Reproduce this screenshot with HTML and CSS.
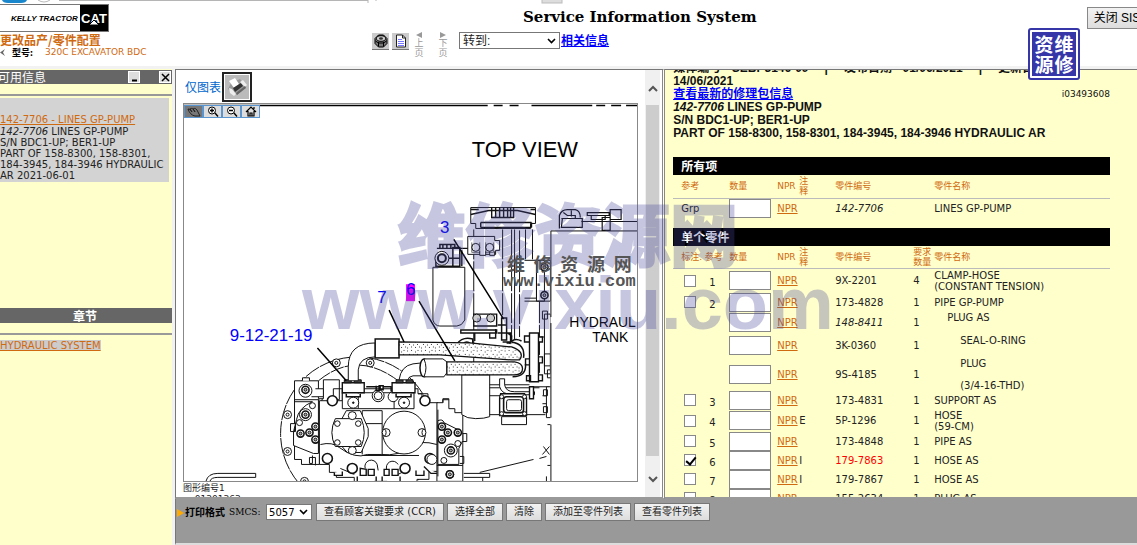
FILE: index.html
```html
<!DOCTYPE html>
<html lang="zh-CN">
<head>
<meta charset="utf-8">
<title>Service Information System</title>
<link rel="stylesheet" href="styles.css">
</head>
<body>
<div class="app">
  <header class="top">
    <svg class="chrome" width="600" height="4" viewBox="0 0 600 4" aria-hidden="true">
      <path d="M2 0h25q-1 3-6 3H8q-5 0-6-3z" fill="#1a86cc"/>
      <path d="M38 0q6 4 12 0" fill="none" stroke="#bbb"/>
      <path d="M59 .5H368M368 0V3M376 0V1" stroke="#b5b5b5"/>
      <rect x="542" y="-1" width="20" height="4" fill="#ddd" stroke="#bbb"/>
    </svg>
    <div class="brand">
      <div class="logo"><span class="dealer">KELLY TRACTOR</span><span class="cat">CAT<svg class="cat-tri" width="10" height="5" viewBox="0 0 10 5"><path d="M0 5 5 0l5 5z" fill="#fff" stroke="#000"/></svg></span></div>
      <a class="change" href="#">更改品产/零件配置</a>
      <div class="model"><svg width="5" height="7" viewBox="0 0 5 7"><path d="M5 0 0 3.500 5 7 3 3.500z" fill="#666"/></svg><span>型号:</span><a href="#">320C EXCAVATOR BDC</a></div>
    </div>
    <div class="middle">
      <h1>Service Information System</h1>
      <div class="tools">
        <button class="tool" aria-label="零件"><svg width="14" height="14" viewBox="0 0 14 14"><path d="M1 4.500 4.500 1h5L13 4.500v5L9.500 13h-5L1 9.500z" fill="#777" stroke="#000"/><ellipse cx="7" cy="4.500" rx="4.500" ry="2.800" fill="#ccc" stroke="#000"/><ellipse cx="7" cy="4.500" rx="2" ry="1.300" fill="#333"/><path d="M4.500 8v4.500M9.500 8v4.500M1.500 7l3 2h5l3-2" fill="none" stroke="#000"/></svg></button>
        <button class="tool" aria-label="文档"><svg width="14" height="14" viewBox="0 0 14 14"><path d="M2.500 1h6l3 3v9h-9z" fill="#fff" stroke="#222"/><path d="M8.500 1v3h3" fill="none" stroke="#222"/><path d="M4 5.500h4M4 7.500h6M4 9.500h6M4 11.500h6" stroke="#77f"/></svg></button>
        <button class="pager"><svg width="6" height="6" viewBox="0 0 6 6"><path d="M6 0v6L0 3z" fill="#999"/></svg><span>上</span><span>页</span></button>
        <button class="pager"><svg width="6" height="6" viewBox="0 0 6 6"><path d="M0 0v6l6-3z" fill="#999"/></svg><span>下</span><span>页</span></button>
        <select class="goto" aria-label="转到"><option>转到:</option></select>
        <a class="related" href="#">相关信息</a>
      </div>
    </div>
    <button class="close-sis">关闭 SIS</button>
  </header>

  <aside class="side">
    <section class="side-part">
      <div class="bar"><h2>可用信息</h2>
        <button class="mini gap" aria-label="最小化"><svg width="9" height="9" viewBox="0 0 9 9"><path d="M2 7.500h5" stroke="#000" stroke-width="2"/></svg></button>
        <button class="mini" aria-label="关闭"><svg width="9" height="9" viewBox="0 0 9 9"><path d="m1 1 7 7M8 1 1 8" stroke="#000" stroke-width="1.500"/></svg></button>
      </div>
      <div class="strip"></div>
      <div class="info"><a href="#">142-7706 - LINES GP-PUMP</a><p><i>142-7706</i> LINES GP-PUMP<br>S/N BDC1-UP; BER1-UP<br>PART OF 158-8300, 158-8301,<br>184-3945, 184-3946 HYDRAULIC<br>AR 2021-06-01</p></div>
    </section>
    <section class="side-part">
      <div class="bar center"><h2>章节</h2></div>
      <div class="strip"></div>
      <a class="chapter" href="#">HYDRAULIC SYSTEM</a>
    </section>
  </aside>

  <main class="graphic">
    <div class="graphic-body">
      <div class="graphic-head"><a href="#">仅图表</a>
        <button class="print" aria-label="打印"><svg width="22" height="22" viewBox="0 0 22 22"><path d="m2 13 3-6 9-4 6 8-9 8z" fill="#999"/><path d="M3 5 9 2l4 6-5 4z" fill="#fff"/><path d="m7 12 8-5 2 3-8 6z" fill="#333"/><path d="m3 12 3 1 4 5-2 2-4-3zM14 6l3-2 4 5-2 2z" fill="#eee"/><path d="m10 17 9-7 1 2-9 7z" fill="#666"/></svg></button>
      </div>
      <div class="drawing">
        <div class="view-tools">
          <button class="on" aria-label="移动"><svg width="14" height="10" viewBox="0 0 14 10"><path d="M1 2q2-1 4 3L3 2q3-2 5 3L6 2q3-2 5 3l2 4H8Q3 8 1 2" fill="none" stroke="#222"/></svg></button>
          <button aria-label="放大"><svg width="14" height="11" viewBox="0 0 14 11"><circle cx="6" cy="4.500" r="3.500" fill="#fff" stroke="#000"/><path d="M4 4.500h4M6 2.500v4M9 7l3 3.500" stroke="#000" stroke-width="1.400"/></svg></button>
          <button aria-label="缩小"><svg width="14" height="11" viewBox="0 0 14 11"><circle cx="6" cy="4.500" r="3.500" fill="#fff" stroke="#000"/><path d="M4 4.500h4M9 7l3 3.500" stroke="#000" stroke-width="1.400"/></svg></button>
          <button aria-label="还原"><svg width="12" height="11" viewBox="0 0 12 11"><path d="M1 6 6 1l5 5M3 5v5h6V5M5 10V7h2v3M9 1v2" fill="none" stroke="#000" stroke-width="1.200"/></svg></button>
        </div>
        <svg class="plan" viewBox="183 104 455 379" role="img" aria-label="TOP VIEW">
          <defs>
            <pattern id="grain" width="14" height="10" patternUnits="userSpaceOnUse"><rect width="14" height="10" fill="#fff"/><path d="M1 2h1M5 1l1 1M9 3h1M12 1v1M3 5l1 1M7 6h1M11 6l1-1M1 9h1M5 8h1M9 9l1-1M13 8h1" stroke="#222" stroke-width=".9"/></pattern>
            <g id="bolt"><circle r="4" fill="#fff"/><circle r="1.500" fill="#fff"/></g>
            <g id="nut"><circle r="3.600" fill="#fff" stroke-width="1.600"/><circle r="1.500" fill="#aaa"/></g>
          </defs>
          <path d="M183 105.500H488M494 105.500h9M510 105.500h9M532 105.500h61M597 105.500h9M612 105.500h10M627 105.500h11" stroke="#000" stroke-width="1.500"/>
          <g fill="#fff" stroke="#111" stroke-width="1">
            <!-- bell housing -->
            <circle cx="357" cy="435" r="77" stroke-dasharray="16 1"/>
            <path d="M318 382Q358 349 402 385" fill="none" stroke-dasharray="14 1"/>
            <use href="#bolt" x="336" y="364"/><use href="#bolt" x="370" y="364"/><use href="#bolt" x="287" y="416"/><use href="#bolt" x="287" y="453"/><use href="#bolt" x="304" y="483"/>
            <path d="M205 483q2-8 12-8h38v4h-38q-7 0-8 4"/>
            <!-- left valve group -->
            <path d="M294 382h24v18h5v-19h16v20h-6v56h-14v9h-18v-5h-7z"/>
            <path d="M294 401h25M294 403h18q-14 6-16 18l-3 12v14l20 8h5V401M290 425h5v8h-5z"/>
            <path d="M302 382v-3h7v3M311 398h12v-8h-8M322 400l-2 6M312 457v8h-3v-6h6v8"/>
            <circle cx="305" cy="392" r="6.500"/><use href="#nut" x="305" y="391"/>
            <circle cx="305" cy="416" r="6"/><use href="#nut" x="305" y="416"/>
            <circle cx="312" cy="407" r="3"/><circle cx="299" cy="424" r="3"/>
            <use href="#nut" x="300" y="435"/><use href="#nut" x="309" y="434"/><use href="#nut" x="315" y="428"/><use href="#nut" x="315" y="441"/>
            <!-- main pump housing -->
            <path d="M319 402h23v-12h76v5h4v9h16v69h-9v8h-12v6h-30v-4h-13v4h-20v-8h-18v-5h-7v-8h-10z"/>
            <path d="M320 446q12-3 19 3 16 12 28 7h14q18 2 31-8 8-7 25-2M333 402v-12h10M418 395h10v9M362 456v-44h20v44M362 425h20M363 457h56M340 470l14 6M410 470l-12 6" fill="none"/>
            <path d="M342 394h72v16h-72zM358 394v16M394 394v16" fill="#fff"/>
            <circle cx="378" cy="397" r="6"/><circle cx="378" cy="397" r="4"/><circle cx="393" cy="398" r="5"/>
            <path d="M366 388h14v3h3v-4h-4v5h-3v-5M383 388h8v4h3" fill="none" stroke-width="1.500"/>
            <path d="M342 384h22v10h-22zM392 384h23v10h-23z" stroke-width="1.400"/>
            <path d="M344 381h7v3h-7zM354 381h7v3h-7zM396 381h7v3h-7zM406 381h7v3h-7z" fill="#444"/>
            <path d="M346 395v3h14v-3M396 395v3h15v-3" stroke-width="1.500"/>
            <circle cx="353" cy="404" r="5.500"/><circle cx="353" cy="404" r=".8" fill="#000"/><circle cx="404" cy="404" r="5.500"/><circle cx="404" cy="404" r=".8" fill="#000"/>
            <path d="M346 412h14l8 18v8l-7 16h-14l-8-9h-5q-4-10 0-22h6z"/>
            <path d="M335 420h26q6 14 0 28h-26q-7-14 0-28z"/>
            <circle cx="352" cy="417" r="4"/><circle cx="352" cy="452" r="4"/>
            <circle cx="337" cy="425" r="2.800"/><circle cx="358" cy="425" r="2.800"/><circle cx="337" cy="444" r="2.800"/><circle cx="358" cy="444" r="2.800"/>
            <circle cx="404" cy="434" r="21.500"/><circle cx="386" cy="434" r="4"/><circle cx="422" cy="434" r="4"/>
            <path d="M384 430a5 5 0 0 1 0 8M424 430a5 5 0 0 0 0 8" fill="none"/>
            <g stroke-width="1.600"><circle cx="332" cy="402" r="5"/><circle cx="425" cy="402" r="5"/><circle cx="327" cy="460" r="5"/><circle cx="430" cy="460" r="5"/><circle cx="352" cy="470" r="5"/><circle cx="405" cy="470" r="5"/></g>
            <path d="M365 470a6 6 0 0 1 12-4l1 6M387 472a6 6 0 0 1 11-6" fill="none"/>
            <path d="M360 470v7h6v-6zM368 471h6v6h-6zM384 471h5v6h-5zM392 471h6v6h-6zM334 474v3h8v-4M416 472v5h8v-5M357 478v5M376 478v5M382 478v5M400 478v5M424 468l7 7h7" stroke-width="1.400"/>
            <!-- right valve group -->
            <path d="M437 404h6v-4h6v10h6v4h8v69h-26zM437 467h26M443 404v-3h6M438 411v67" />
            <path d="M438 422q5-2 6 2l14 7 5 4v7l-4 8v16h-21z"/>
            <use href="#nut" x="442" y="428"/><use href="#nut" x="458" y="434"/><use href="#nut" x="448" y="434"/><use href="#nut" x="442" y="441"/>
            <circle cx="451" cy="452" r="6.500"/><use href="#nut" x="451" y="452"/><circle cx="458" cy="445" r="3"/><circle cx="444" cy="462" r="3"/><circle cx="432" cy="461" r="5"/>
            <circle cx="450" cy="476" r="4"/><use href="#nut" x="450" y="476"/>
            <path d="M463 435h4v8h-4M460 458h4v7h-4M464 475h26v4h-26M483 479v4M480 474l54-13M540 460l7-2" fill="none"/>
            <!-- top assembly -->
            <path d="M471 208h65v16h-5v5h-55v-5h-5z"/>
            <path d="M471 215l18-4h29l18 4M471 210h8M531 210h5M492 208v10h22v-10M496 208v10M500 208v10M504 208v10M508 208v10M511 208v10M481 223h51M481 228h51M481 223v5M532 223v5" stroke-width="1.400" fill="none"/>
            <path d="M474 230v144M503 230v86M512 230v108M520 231v107M526 230v31M533 230v31M540 262v112" fill="none" stroke-dasharray="30 2"/>
            <path d="M515 230v110" fill="none"/>
            <path d="M468 237h27v4h5v10h-4v4h-28z"/><path d="M480 252v4h6v-4M490 252v4h5v-4"/>
            <circle cx="476" cy="248" r="4"/><circle cx="490" cy="248" r="4"/><path d="M472 243v10h8v-10M486 243v10h8v-10" fill="none" stroke-width=".6"/>
            <path d="M525 261h20v41h-20M525 299h12v-36M537 261h14v41h-14z"/><use href="#nut" x="545" y="268"/><use href="#nut" x="545" y="296"/>
            <!-- filter canister -->
            <path d="M433 268h32v53q-3 6-8 6h-17q-5 0-7-6z"/>
            <path d="M436 267v-8h24v8zM437 249h26M440 245h15v4h-15zM443 245v4M447 245v4M451 245v4M460 259v-11h-7v19" stroke-width="1.500"/>
            <circle cx="442" cy="259" r="7"/><circle cx="442" cy="259" r="4" stroke-width="2"/>
            <path d="M463 249h5M462 251v16M474 315h23v12h-23zM461 331h36v3h-36zM475 334v8M490 334v5h6v-9" stroke-width="1.400"/>
            <circle cx="477" cy="319" r="4" fill="#ccc"/><circle cx="491" cy="319" r="4" fill="#ccc"/>
            <path d="M502 319h5v22h-5zM498 326h9M498 334h13v9h-8M508 334l4 3v7h-5" stroke-width="1.500"/>
            <path d="M457 345q6-8 16-5v5M463 345q4-4 8 0M510 345q4-7 12-3" stroke-width="1.500"/>
            <!-- lower pipes -->
            <path d="M462 376h28v42q-5 2-14 2t-14-4z"/>
            <path d="M490 386h40M490 389h50M490 397h12M490 416h56M530 388h20M543 397h7v8h-7M541 338h9" fill="none"/>
            <path d="M500 380v8q2 8 14 8h21v-3h-20q-9 0-10-7v-6z"/>
            <path d="M501 395h24l2 4v18h-27v-18z" stroke-width="1.400"/><rect x="504" y="398" width="20" height="16" rx="3" stroke-width="1.600"/><rect x="507" y="401" width="15" height="11" rx="2"/>
            <circle cx="502" cy="398" r="2"/><circle cx="525" cy="398" r="2"/><circle cx="502" cy="415" r="2"/><circle cx="525" cy="415" r="2"/>
            <path d="M502 418h25v8h-25z"/><path d="M530 388h4v12h-4zM530 334h9v49h-9zM525 337h5v6h-5zM539 338h4v5h-4zM526 360h4v6h-4zM539 358h4v6h-4zM527 377h4v5h-4zM539 376h4v6h-4z" stroke-width="1.400"/>
            <path d="M545 315h6v60h-6zM543 312h5v8h-5zM545 355h6v12h-6zM548 371h5v8h-5zM547 388h5v31h-5zM544 391h4v6h-4zM544 408h4v6h-4zM548 426h4v41h-4M544 448l6 8M543 456l7-8M547 478v5"/>
            <!-- hydraulic tank -->
            <path d="M638 231H551v252h88z" stroke="none"/>
            <path d="M638 231.500H551.500V318M551.500 324v95M551.500 426v57" fill="none"/>
            <path d="M560 229v-13q2-6 8-6h8q5 1 5 8M562 219h14v-3h-8l-4-3M572 211v6M563 219h20v9h-21zM588 213h22v3h-22zM592 216v4h14v-4M611 210h11v10h-11zM582 222h56M603 218h8v13h-8z" stroke-width="1.200"/>
            <!-- hose elbows and fittings -->
            <path d="M348 382v-14q0-24 27-24v14q-16 0-17 13v11z"/>
            <rect x="375" y="340" width="24" height="19" stroke-width="1.500"/>
            <path d="M399 343l71 1 42 4q14 5 8 13l-8 0-72-5h-41z" fill="url(#grain)" stroke-width="1.300"/>
            <path d="M399 381q2-14 14-16l9-1v13h-9q-5 1-5 4z"/>
            <ellipse cx="424" cy="369" rx="4" ry="9" stroke-width="1.500"/>
            <path d="M424 360h19l4 3v11l-3 4h-20q4-9 0-18z"/>
            <path d="M447 363h68q8 1 8 7t-8 6h-68z" fill="url(#grain)" stroke-width="1.300"/>
            <path d="M512 343q14 2 12 16M513 378q14 0 13-13" fill="none" stroke-width="1.500"/>
          </g>
          <path d="M317 349l29 33M389 311l15 32M419 302l36 60M454 240l50 80" stroke="#000" stroke-width="1.500"/>
          <rect class="hit" x="406" y="285" width="9" height="17"/>
          <g class="callout"><text x="229" y="342">9-12-21-19</text><text x="377" y="304">7</text><text x="406" y="296">6</text><text x="440" y="234">3</text></g>
          <text class="heading" x="472" y="157">TOP VIEW</text>
          <g class="tank"><text x="570" y="328">HYDRAUL</text><text x="593" y="343">TANK</text></g>
        </svg>
      </div>
      <p class="caption">图形编号1<br><span>g01301363</span></p>
    </div>
    <div class="scroll" aria-hidden="true">
      <svg width="10" height="7" viewBox="0 0 10 7"><path d="m1 6 4-4 4 4" fill="none" stroke="#555" stroke-width="2"/></svg>
      <div class="thumb"></div>
      <svg width="10" height="7" viewBox="0 0 10 7"><path d="m1 1 4 4 4-4" fill="none" stroke="#555" stroke-width="2"/></svg>
    </div>
  </main>

  <section class="parts">
    <div class="doc">
      <div class="meta"><span>媒体编号 - SEBP3146-09</span><span>|</span><span>发布日期 - 01/06/2021</span><span>|</span><span>更新日期 -</span></div>
      <div>14/06/2021</div>
      <div class="doc-row"><a href="#">查看最新的修理包信息</a><span>i03493608</span></div>
      <div><i>142-7706</i> LINES GP-PUMP</div>
      <div>S/N BDC1-UP; BER1-UP</div>
      <div>PART OF 158-8300, 158-8301, 184-3945, 184-3946 HYDRAULIC AR</div>
    </div>
    <h3>所有项</h3>
    <table class="all">
      <colgroup><col class="c-tick"><col class="c-ref"><col class="c-qty"><col class="c-npr"><col class="c-note"><col class="c-no"><col class="c-req"><col></colgroup>
      <thead><tr><th colspan="2">参考</th><th>数量</th><th>NPR</th><th class="stack">注释</th><th>零件编号</th><th></th><th>零件名称</th></tr></thead>
      <tbody><tr><td colspan="2">Grp</td><td><input type="text" aria-label="数量 142-7706"></td><td><a href="#">NPR</a></td><td></td><td><i>142-7706</i></td><td></td><td>LINES GP-PUMP</td></tr></tbody>
    </table>
    <h3>单个零件</h3>
    <table>
      <colgroup><col class="c-tick"><col class="c-ref"><col class="c-qty"><col class="c-npr"><col class="c-note"><col class="c-no"><col class="c-req"><col></colgroup>
      <thead><tr><th colspan="2">标注. 参考</th><th>数量</th><th>NPR</th><th class="stack">注释</th><th>零件编号</th><th class="need">要求数量</th><th>零件名称</th></tr></thead>
      <tbody>
        <tr class="roomy"><td><input type="checkbox" aria-label="1"></td><td class="ref">1</td><td><input type="text" aria-label="数量 1"></td><td><a href="#">NPR</a></td><td></td><td>9X-2201</td><td>4</td><td>CLAMP-HOSE<br>(CONSTANT TENSION)</td></tr>
        <tr><td><input type="checkbox" aria-label="2"></td><td class="ref">2</td><td><input type="text" aria-label="数量 2"></td><td><a href="#">NPR</a></td><td></td><td>173-4828</td><td>1</td><td>PIPE GP-PUMP</td></tr>
        <tr><td></td><td></td><td><input type="text" aria-label="数量 148-8411"></td><td><a href="#">NPR</a></td><td></td><td><i>148-8411</i></td><td>1</td><td class="in1">PLUG AS<br>&nbsp;</td></tr>
        <tr class="roomy"><td></td><td></td><td><input type="text" aria-label="数量 3K-0360"></td><td><a href="#">NPR</a></td><td></td><td>3K-0360</td><td>1</td><td class="in2">SEAL-O-RING<br>&nbsp;</td></tr>
        <tr><td></td><td></td><td><input type="text" aria-label="数量 9S-4185"></td><td><a href="#">NPR</a></td><td></td><td>9S-4185</td><td>1</td><td class="in2">PLUG<br><br>(3/4-16-THD)</td></tr>
        <tr><td><input type="checkbox" aria-label="3"></td><td class="ref">3</td><td><input type="text" aria-label="数量 3"></td><td><a href="#">NPR</a></td><td></td><td>173-4831</td><td>1</td><td>SUPPORT AS</td></tr>
        <tr><td><input type="checkbox" aria-label="4"></td><td class="ref">4</td><td><input type="text" aria-label="数量 4"></td><td><a href="#">NPR</a></td><td>E</td><td>5P-1296</td><td>1</td><td>HOSE<br>(59-CM)</td></tr>
        <tr><td><input type="checkbox" aria-label="5"></td><td class="ref">5</td><td><input type="text" aria-label="数量 5"></td><td><a href="#">NPR</a></td><td></td><td>173-4848</td><td>1</td><td>PIPE AS</td></tr>
        <tr><td><input type="checkbox" aria-label="6" checked></td><td class="ref">6</td><td><input type="text" aria-label="数量 6"></td><td><a href="#">NPR</a></td><td>I</td><td class="red">179-7863</td><td>1</td><td>HOSE AS</td></tr>
        <tr><td><input type="checkbox" aria-label="7"></td><td class="ref">7</td><td><input type="text" aria-label="数量 7"></td><td><a href="#">NPR</a></td><td>I</td><td>179-7867</td><td>1</td><td>HOSE AS</td></tr>
        <tr><td><input type="checkbox" aria-label="8"></td><td class="ref">8</td><td><input type="text" aria-label="数量 8"></td><td><a href="#">NPR</a></td><td></td><td>155-2634</td><td>1</td><td>PLUG AS</td></tr>
      </tbody>
    </table>
  </section>

  <footer class="actions">
    <svg width="7" height="8" viewBox="0 0 7 8"><path d="M0 0v8l7-4z" fill="#fa0"/></svg>
    <b>打印格式</b>
    <label for="smcs">SMCS:</label>
    <select id="smcs"><option>5057</option></select>
    <button>查看顾客关键要求 (CCR)</button><button>选择全部</button><button>清除</button><button>添加至零件列表</button><button>查看零件列表</button>
  </footer>

  <div class="mark-big"><div class="cn">维修资源网</div><div class="url">www.vixiu.com</div></div>
  <div class="mark-small"><div class="cn"><span>维</span><span>修</span><span>资</span><span>源</span><span>网</span></div><div class="url">www.vixiu.com</div></div>
  <div class="stamp"><span>资</span><span>维</span><span>源</span><span>修</span></div>
</div>
</body>
</html>
```
FILE: styles.css
```css
* { box-sizing: border-box; }
body { margin: 0; font: 10px/11px "DejaVu Sans", "Noto Sans CJK SC", sans-serif; color: #222; }
h1, h2, h3, p { margin: 0; }
button, select, input { font: inherit; margin: 0; }
button { padding: 0; }
a { color: #d06a10; }
svg { display: block; flex: none; }

.app {
  position: relative;
  display: grid;
  grid-template: 69px minmax(0, 1fr) 46px / 15.4% 43.1% minmax(0, 1fr);
  height: 100vh;
  overflow: hidden;
  background: #f2f2f2;
}

.top { grid-column: 1 / -1; display: flex; align-items: flex-start; background: #fff; border-bottom: 3px solid #f2f2f2; position: relative; overflow: hidden; }
.chrome { position: absolute; left: 0; top: 0; }
.brand { width: 372px; padding-top: 4px; }
.logo { display: flex; width: 109px; height: 28px; border: 1px solid #777; border-left: 0; align-items: stretch; }
.dealer { flex: 1; padding-left: 11px; white-space: nowrap; font: italic bold 8px/27px "Liberation Sans", sans-serif; color: #000; }
.cat { position: relative; width: 28px; background: #000; color: #fff; text-align: center; font: bold 13px/27px "Liberation Sans", sans-serif; }
.cat-tri { position: absolute; left: 9px; bottom: 6px; }
.change { display: block; font: bold 12px/14px "Noto Sans CJK SC", sans-serif; text-decoration: none; margin-top: 1px; }
.model { display: flex; align-items: center; gap: 7px; height: 11px; color: #000; }
.model span { font: bold 9px/11px "Noto Sans CJK SC", sans-serif; width: 26px; }
.model a { text-decoration: none; font-size: 9px; }
.middle { flex: 1; padding-top: 8px; }
h1 { font: bold 15px/18px "DejaVu Serif", serif; color: #000; padding-left: 151px; white-space: nowrap; }
.tools { display: flex; align-items: flex-start; padding-top: 6px; }
.tool { width: 17px; height: 17px; margin: 1px 3px 0 0; display: grid; place-items: center; background: #ccc; border: 0; border-bottom: 1px solid #777; }
.pager { display: flex; flex-direction: column; align-items: center; width: 10px; margin: 0 14px 0 2px; border: 0; background: none; color: #999; font: 9px/10px "Noto Sans CJK SC", sans-serif; }
.pager + .pager { margin-left: 0; margin-right: 11px; }
select {
  appearance: none;
  border: 1px solid #777;
  border-radius: 0;
  color: #222;
  background: #fff url("data:image/svg+xml,%3Csvg xmlns='http://www.w3.org/2000/svg' width='9' height='6'%3E%3Cpath d='M1 1l3.500 3.500L8 1' fill='none' stroke='%23000' stroke-width='1.600'/%3E%3C/svg%3E") no-repeat right 3px center;
}
.goto { width: 101px; height: 17px; font: 12px/14px "Liberation Sans", "Noto Sans CJK SC", sans-serif; padding: 0 14px 0 3px; }
.related { font: bold 12px/16px "Noto Sans CJK SC", sans-serif; color: #00f; margin-left: 1px; }
.close-sis { width: 60px; height: 22px; margin: 7px -10px 0 0; background: linear-gradient(#f2f2f2, #ddd); border: 1px solid #888; font: 12px/18px "Liberation Sans", "Noto Sans CJK SC", sans-serif; white-space: nowrap; }

.side { grid-row: 2 / 4; grid-column: 1; display: grid; grid-template-rows: 1fr 1fr; margin-right: 3px; background: #ffffcc; overflow: hidden; }
.bar { display: flex; align-items: center; height: 14px; margin-top: 1px; background: #666; color: #fff; }
.bar h2 { flex: 1; font: 12px/14px "Noto Sans CJK SC", sans-serif; margin-left: -2px; }
.bar.center { justify-content: center; height: 15px; }
.bar.center h2 { flex: none; font-weight: bold; }
.mini { width: 12px; height: 12px; margin-right: 1px; display: grid; place-items: center; border: 1px solid #fff; background: #ddd; }
.mini.gap { margin-right: 19px; }
.strip { height: 12px; border-bottom: 2px solid #999; }
.info { margin: 2px 3px 0 0; padding: 16px 0 0; height: 84px; background: #d3d3d3; white-space: nowrap; }
.info p { padding-top: 1px; }
.chapter { display: inline-block; margin-top: 5px; background: #ccc; }

.graphic { display: flex; min-height: 0; background: #fff; border: 1px solid #777; border-right: 3px double #888; border-bottom: 2px solid #999; padding-right: 2px; }
.graphic-body { flex: 1; min-width: 0; padding: 1px 7px 0; overflow: hidden; }
.graphic-head { display: flex; align-items: center; height: 32px; gap: 1px; padding-left: 2px; }
.graphic-head a { font: 12px/16px "Noto Sans CJK SC", sans-serif; color: #06c; text-decoration: none; }
.print { width: 30px; height: 30px; display: grid; place-items: center; border: 2px solid #222; background: #bbb; outline: 1px solid #fff; outline-offset: -3px; }
.drawing { position: relative; border: 1px solid #888; }
.plan { width: 100%; }
.view-tools { position: absolute; left: 0; top: 1px; display: flex; }
.view-tools button { width: 19px; height: 13px; display: grid; place-items: center; border: 1px solid #5b95d0; background: #ddd; }
.view-tools .on { background: #777; }
.hit { fill: #f0f; }
.callout { font: 17px "Liberation Sans", sans-serif; fill: #00f; }
.heading { font: 22px "Liberation Sans", sans-serif; fill: #000; }
.tank { font: 14px "Liberation Sans", sans-serif; fill: #000; }
.caption { padding-top: 1px; font: 9px/11px "DejaVu Sans", "Noto Sans CJK SC", sans-serif; white-space: nowrap; }
.caption span { padding-left: 6px; }
.scroll { width: 15px; display: flex; flex-direction: column; align-items: center; padding: 15px 0 14px; background: #f0f0f0; }
.thumb { flex: 1; width: 13px; margin: 13px 0 20px; background: #cdcdcd; }

.parts { min-width: 0; overflow: hidden; background: #ffffcc; border-top: 1px solid #777; border-bottom: 2px solid #999; padding: 0 27px 0 8px; }
.doc { margin-top: -8px; font: bold 12px/13px "Liberation Sans", "Noto Sans CJK SC", sans-serif; color: #111; white-space: nowrap; }
.doc div { height: 13px; }
.meta { display: flex; gap: 16px; }
.doc-row { display: flex; justify-content: space-between; }
.doc-row a { color: #00f; }
.doc-row span { font: 9px/13px "DejaVu Sans", sans-serif; }
h3 { height: 18px; margin-top: 17px; padding-left: 8px; background: #000; color: #fff; font: bold 12px/18px "Noto Sans CJK SC", sans-serif; }
table { width: 100%; table-layout: fixed; border-collapse: collapse; }
.all { margin-bottom: -7px; }
th { height: 23px; padding: 0; border-bottom: 1px solid #bbb; color: #d06a10; font-weight: normal; font-size: 9px; line-height: 10px; text-align: left; vertical-align: middle; white-space: nowrap; }
td { height: 19px; padding: 0; vertical-align: middle; white-space: nowrap; }
.roomy td { height: 24px; }
th:first-child, td:first-child { padding-left: 8px; }
td:first-child input { margin-left: 3px; }
th.stack { white-space: normal; padding-right: 26px; word-break: break-all; }
th.need { white-space: normal; }
.c-tick { width: 36px; } .c-ref { width: 20px; } .c-qty { width: 48px; } .c-npr { width: 22px; }
.c-note { width: 36px; } .c-no { width: 78px; } .c-req { width: 21px; }
input[type="text"] { display: block; width: 42px; height: 19px; padding: 0; border: 1px solid #888; border-radius: 0; background: #fff; }
input[type="checkbox"] { appearance: none; display: block; position: relative; width: 12px; height: 12px; border: 1px solid #888; background: #fff; }
input[type="checkbox"]:checked::after { content: ""; position: absolute; left: 3px; top: 0; width: 4px; height: 8px; border: solid #000; border-width: 0 2px 2px 0; transform: rotate(40deg); }
.ref { padding-top: 4px; }
.in1 { padding-left: 13px; }
.in2 { padding-left: 26px; }
.red { color: #f00; }

.actions { grid-column: 2 / 4; display: flex; align-items: flex-start; padding: 4px 0 0 1px; background: #999; border-left: 1px solid #777; border-bottom: 2px solid #ddd; color: #000; white-space: nowrap; }
.actions svg { margin-top: 6px; }
.actions b { font: bold 10px/19px "Liberation Serif", "Noto Sans CJK SC", serif; margin: 0 4px 0 1px; }
.actions label { font: 9px/19px "DejaVu Serif", serif; width: 37px; }
.actions select { width: 46px; height: 16px; margin: 1px 4px 0 0; padding: 0 12px 0 2px; color: #000; }
.actions button { height: 18px; padding: 0 7px; margin-right: 3px; border: 1px solid #777; background: linear-gradient(#f2f2f2, #ddd); color: #222; font: 10px/16px "DejaVu Sans", "Noto Sans CJK SC", sans-serif; }

.mark-big, .mark-small, .stamp { position: absolute; pointer-events: none; white-space: nowrap; }
.mark-big { left: 302px; top: 196px; color: #46469b; opacity: .3; text-align: center; }
.mark-big .cn { font: bold 68px/72px "Noto Sans CJK SC", sans-serif; -webkit-text-stroke: 3px #46469b; }
.mark-big .url { font: bold 74px/72px "Liberation Sans", sans-serif; }
.mark-small { left: 503px; top: 253px; color: #555; }
.mark-small .cn { display: flex; justify-content: space-between; padding: 0 4px; font: bold 18px/20px "Noto Sans CJK SC", sans-serif; }
.mark-small .url { font: bold 17px/18px "Liberation Mono", monospace; }
.stamp { left: 1028px; top: 28px; width: 52px; height: 52px; display: grid; grid-template-columns: 20px 20px; place-content: center; justify-items: center; background: #3636a8; border-radius: 3px; outline: 2px solid #fff; outline-offset: -4px; color: #fff; font: bold 19px/20px "Noto Sans CJK SC", sans-serif; }
```
